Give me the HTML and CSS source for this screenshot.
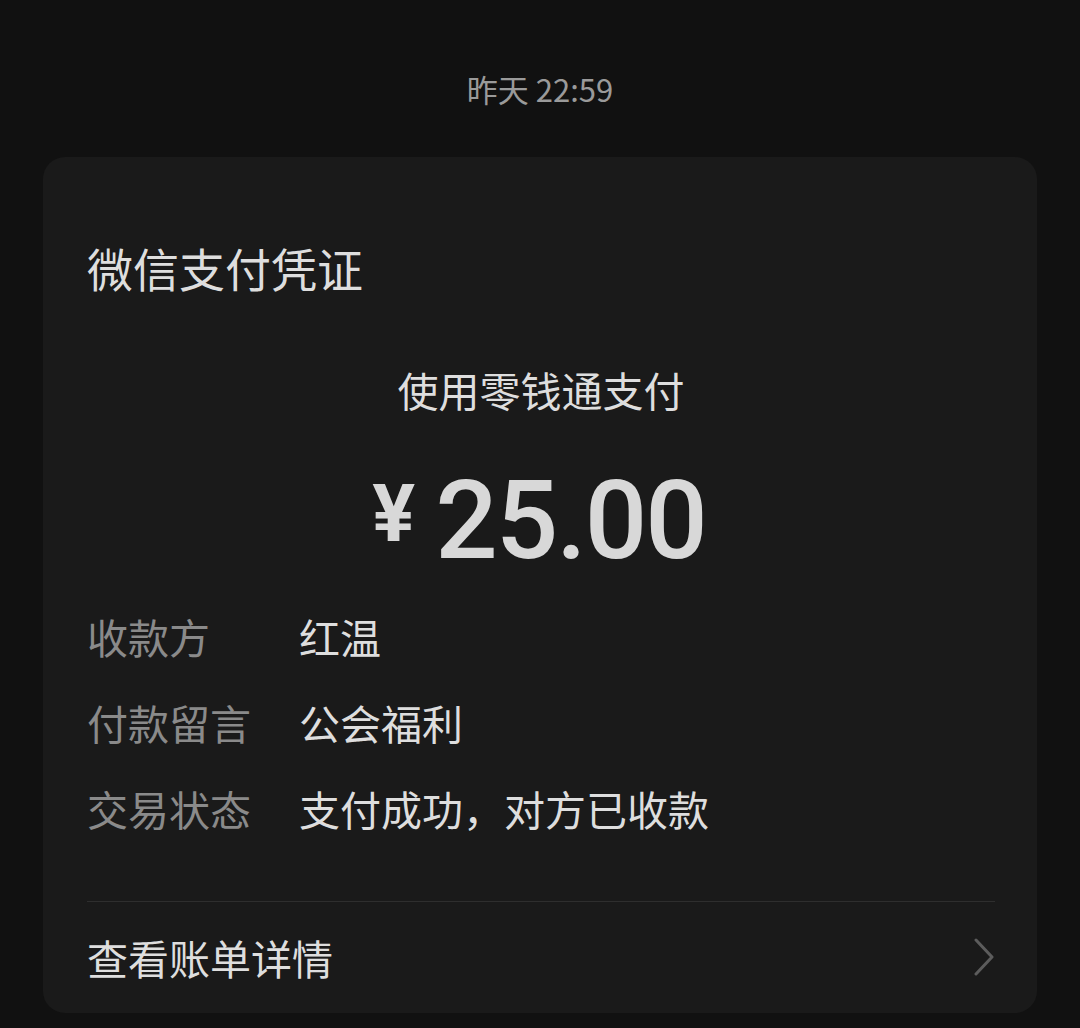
FILE: index.html
```html
<!DOCTYPE html>
<html lang="zh-CN">
<head>
<meta charset="utf-8">
<link rel="stylesheet" href="styles.css">
</head>
<body>
<div class="time">昨天 22:59</div>
<div class="card">
  <div class="title">微信支付凭证</div>
  <div class="sub">使用零钱通支付</div>
  <div class="amount"><span class="yen">¥</span><span class="num">25.00</span></div>
  <div class="rows">
    <div class="row"><span class="label">收款方</span><span class="value">红温</span></div>
    <div class="row"><span class="label">付款留言</span><span class="value">公会福利</span></div>
    <div class="row"><span class="label">交易状态</span><span class="value">支付成功，对方已收款</span></div>
  </div>
  <div class="divider"></div>
  <div class="detail">
    <span>查看账单详情</span>
    <svg class="chev" width="22" height="38" viewBox="0 0 22 38"><polyline points="3,2 19,19 3,36" fill="none" stroke="#5c5c5c" stroke-width="3" stroke-linecap="round" stroke-linejoin="round"/></svg>
  </div>
</div>
</body>
</html>
```
FILE: styles.css
```css
html, body {
  margin: 0;
  padding: 0;
  background: #111111;
  font-family: "Noto Sans CJK SC", "Noto Sans", sans-serif;
}
.time {
  padding-top: 69px;
  height: 40px;
  line-height: 40px;
  text-align: center;
  font-size: 31px;
  color: #9a9a9a;
  margin-bottom: 48px;
}
.card {
  margin: 0 43px;
  background: #1a1a1a;
  border-radius: 22px;
  padding: 80px 42px 26px 44px;
}
.title {
  height: 60px;
  line-height: 60px;
  font-size: 46px;
  color: #dedede;
}
.sub {
  margin-top: 62px;
  height: 60px;
  line-height: 60px;
  font-size: 41px;
  color: #dedede;
  text-align: center;
}
.amount {
  margin-top: 33px;
  height: 135px;
  display: flex;
  justify-content: center;
  align-items: center;
  color: #d8d8d8;
  padding-right: 4px;
  padding-top: 2px;
  box-sizing: border-box;
  margin-bottom: 6px;
}
.yen {
  font-family: "Roboto", sans-serif;
  font-weight: 700;
  font-size: 80px;
  margin-right: 20px;
  margin-top: -14px;
}
.num {
  font-family: "Roboto", sans-serif;
  font-weight: 500;
  font-size: 110px;
  letter-spacing: -2px;
}
.row {
  display: flex;
  height: 86px;
  line-height: 86px;
  font-size: 41px;
}
.label {
  width: 212px;
  color: #8a8a8a;
}
.value {
  color: #dedede;
}
.divider {
  margin-top: 50px;
  height: 1px;
  background: #2e2e2e;
}
.detail {
  margin-top: 25px;
  height: 60px;
  display: flex;
  justify-content: space-between;
  align-items: center;
  font-size: 41px;
  color: #dedede;
}
```
